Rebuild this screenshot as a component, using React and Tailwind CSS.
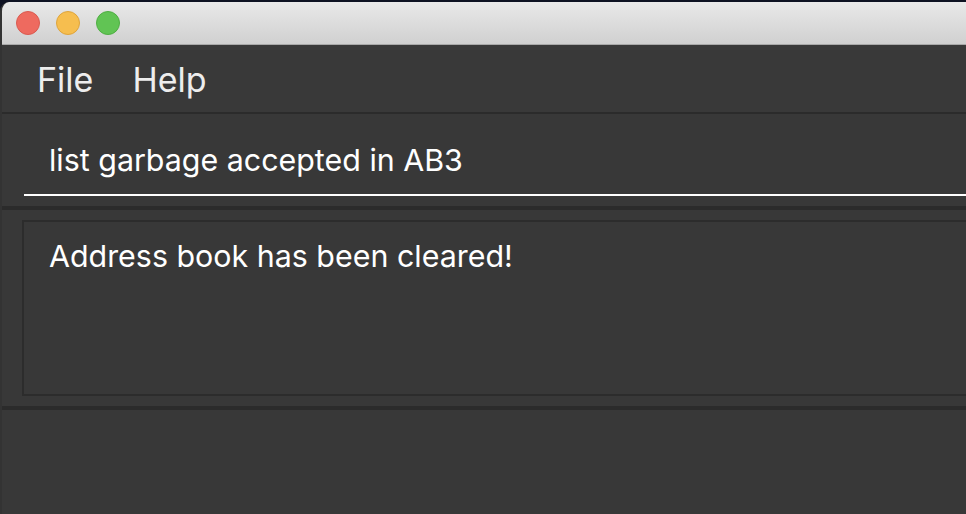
export default function App() {
  const font = { fontFamily: 'Inter, "Liberation Sans", Arial, sans-serif' };
  return (
    <div className="w-[966px] h-[514px] overflow-hidden bg-[#0e1222] pt-[2px]" style={font}>
      <div className="h-[512px] flex flex-col bg-[#383838] rounded-tl-[9px] overflow-hidden border-l-2 border-[#333333]">
        {/* title bar */}
        <div className="h-[43px] shrink-0 flex items-center gap-[16px] pl-[14px] bg-gradient-to-b from-[#e9e9e9] to-[#d0d0d0] border-b border-[#a9a9a9]">
          <span className="w-[24px] h-[24px] rounded-full bg-[#ee6a5f] border border-[#d95a50]" />
          <span className="w-[24px] h-[24px] rounded-full bg-[#f6be4f] border border-[#dea43c]" />
          <span className="w-[24px] h-[24px] rounded-full bg-[#61c454] border border-[#4fae43]" />
        </div>

        {/* menu bar */}
        <div className="h-[67px] shrink-0 flex items-center gap-[39px] pl-[35px] pt-[2px] text-[34px] text-[#ededed] bg-[#393939]">
          <span>File</span>
          <span>Help</span>
        </div>
        <div className="h-[2px] shrink-0 bg-[#2b2b2b]" />

        {/* command box */}
        <div className="h-[92px] shrink-0 pl-[22px] pt-[27px]">
          <div className="border-b-2 border-white h-[55px] pl-[25px] text-[30.4px] text-white leading-[38px]">
            list garbage accepted in AB3
          </div>
        </div>
        <div className="h-[4px] shrink-0 bg-[#2b2b2b]" />

        {/* result display */}
        <div className="h-[196px] shrink-0 pl-[20px] pt-[10px]">
          <div className="h-[176px] border-2 border-r-0 border-[#2c2c2c] pl-[25px] pt-[15px] text-[30.4px] text-white leading-[38px]">
            Address book has been cleared!
          </div>
        </div>
        <div className="h-[4px] shrink-0 bg-[#2b2b2b]" />

        {/* list area */}
        <div className="flex-1 bg-[#383838]" />
      </div>
    </div>
  );
}
